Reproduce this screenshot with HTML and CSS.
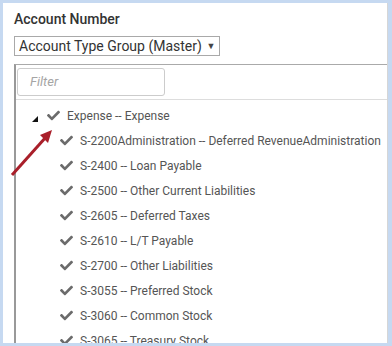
FILE: index.html
```html
<!DOCTYPE html>
<html>
<head>
  <meta content="text/html; charset=UTF-8" http-equiv="content-type" />
<link rel="stylesheet" href="styles.css">
</head>
<body>
  <div id="panel">
    <div class="fieldLabel">Account Number</div>
    <div class="selectBox">Account Type Group (Master) <span class="caret">&#9660;</span></div>
    <div id="treeBox">
      <div class="filterRow">
        <div class="filterInput">Filter</div>
      </div>
      <ul class="tree">
        <li class="root">
          <span class="toggle"></span>
          <svg class="check" viewBox="0 0 512 512"><path d="M173.9 439.4l-166.4-166.4c-10-10-10-26.2 0-36.2l36.2-36.2c10-10 26.2-10 36.2 0L192 312.7 432.1 72.6c10-10 26.2-10 36.2 0l36.2 36.2c10 10 10 26.2 0 36.2l-294.4 294.4c-10 10-26.2 10-36.2 0z"/></svg>
          <span class="label">Expense -- Expense</span>
        </li>
        <li><svg class="check" viewBox="0 0 512 512"><path d="M173.9 439.4l-166.4-166.4c-10-10-10-26.2 0-36.2l36.2-36.2c10-10 26.2-10 36.2 0L192 312.7 432.1 72.6c10-10 26.2-10 36.2 0l36.2 36.2c10 10 10 26.2 0 36.2l-294.4 294.4c-10 10-26.2 10-36.2 0z"/></svg><span class="label">S-2200Administration -- Deferred RevenueAdministration</span></li>
        <li><svg class="check" viewBox="0 0 512 512"><path d="M173.9 439.4l-166.4-166.4c-10-10-10-26.2 0-36.2l36.2-36.2c10-10 26.2-10 36.2 0L192 312.7 432.1 72.6c10-10 26.2-10 36.2 0l36.2 36.2c10 10 10 26.2 0 36.2l-294.4 294.4c-10 10-26.2 10-36.2 0z"/></svg><span class="label">S-2400 -- Loan Payable</span></li>
        <li><svg class="check" viewBox="0 0 512 512"><path d="M173.9 439.4l-166.4-166.4c-10-10-10-26.2 0-36.2l36.2-36.2c10-10 26.2-10 36.2 0L192 312.7 432.1 72.6c10-10 26.2-10 36.2 0l36.2 36.2c10 10 10 26.2 0 36.2l-294.4 294.4c-10 10-26.2 10-36.2 0z"/></svg><span class="label">S-2500 -- Other Current Liabilities</span></li>
        <li><svg class="check" viewBox="0 0 512 512"><path d="M173.9 439.4l-166.4-166.4c-10-10-10-26.2 0-36.2l36.2-36.2c10-10 26.2-10 36.2 0L192 312.7 432.1 72.6c10-10 26.2-10 36.2 0l36.2 36.2c10 10 10 26.2 0 36.2l-294.4 294.4c-10 10-26.2 10-36.2 0z"/></svg><span class="label">S-2605 -- Deferred Taxes</span></li>
        <li><svg class="check" viewBox="0 0 512 512"><path d="M173.9 439.4l-166.4-166.4c-10-10-10-26.2 0-36.2l36.2-36.2c10-10 26.2-10 36.2 0L192 312.7 432.1 72.6c10-10 26.2-10 36.2 0l36.2 36.2c10 10 10 26.2 0 36.2l-294.4 294.4c-10 10-26.2 10-36.2 0z"/></svg><span class="label">S-2610 -- L/T Payable</span></li>
        <li><svg class="check" viewBox="0 0 512 512"><path d="M173.9 439.4l-166.4-166.4c-10-10-10-26.2 0-36.2l36.2-36.2c10-10 26.2-10 36.2 0L192 312.7 432.1 72.6c10-10 26.2-10 36.2 0l36.2 36.2c10 10 10 26.2 0 36.2l-294.4 294.4c-10 10-26.2 10-36.2 0z"/></svg><span class="label">S-2700 -- Other Liabilities</span></li>
        <li><svg class="check" viewBox="0 0 512 512"><path d="M173.9 439.4l-166.4-166.4c-10-10-10-26.2 0-36.2l36.2-36.2c10-10 26.2-10 36.2 0L192 312.7 432.1 72.6c10-10 26.2-10 36.2 0l36.2 36.2c10 10 10 26.2 0 36.2l-294.4 294.4c-10 10-26.2 10-36.2 0z"/></svg><span class="label">S-3055 -- Preferred Stock</span></li>
        <li><svg class="check" viewBox="0 0 512 512"><path d="M173.9 439.4l-166.4-166.4c-10-10-10-26.2 0-36.2l36.2-36.2c10-10 26.2-10 36.2 0L192 312.7 432.1 72.6c10-10 26.2-10 36.2 0l36.2 36.2c10 10 10 26.2 0 36.2l-294.4 294.4c-10 10-26.2 10-36.2 0z"/></svg><span class="label">S-3060 -- Common Stock</span></li>
        <li><svg class="check" viewBox="0 0 512 512"><path d="M173.9 439.4l-166.4-166.4c-10-10-10-26.2 0-36.2l36.2-36.2c10-10 26.2-10 36.2 0L192 312.7 432.1 72.6c10-10 26.2-10 36.2 0l36.2 36.2c10 10 10 26.2 0 36.2l-294.4 294.4c-10 10-26.2 10-36.2 0z"/></svg><span class="label">S-3065 -- Treasury Stock</span></li>
      </ul>
    </div>
    <!-- callout arrow drawn over the tree -->
    <svg class="callout" width="60" height="60" viewBox="0 0 60 60">
      <line x1="2" y1="54" x2="36" y2="16" stroke="#a91f2a" stroke-width="3"/>
      <polygon points="42,9 30,14 38,22" fill="#a91f2a"/>
    </svg>
  </div>
</body>
</html>
```

FILE: styles.css
```css
html, body {
  margin: 0;
  padding: 0;
  background: #c6d9f1;
  overflow: hidden;
}
body {
  padding: 3px 4px 3px 3px;
  height: 346px;
  box-sizing: border-box;
  font-family: Roboto, "Liberation Sans", sans-serif;
}
#panel {
  position: relative;
  background: #fff;
  border-right: 1px solid #d6d6d6;
  height: 340px;
  padding: 6px 0 0 11px;
  box-sizing: border-box;
  overflow: hidden;
}
.fieldLabel {
  font-size: 14px;
  font-weight: 500;
  color: #333;
  line-height: 20px;
}
.selectBox {
  display: inline-block;
  margin-top: 7px;
  height: 20px;
  line-height: 19px;
  padding: 0 4px 0 4px;
  border: 1px solid #a9a9a9;
  font-size: 14px;
  color: #333;
  box-sizing: border-box;
}
.selectBox .caret {
  font-size: 9px;
  color: #444;
  vertical-align: 2px;
  margin-left: 1px;
}
#treeBox {
  margin-top: 8px;
  border-top: 1px solid #aaa;
  border-left: 2px solid #999;
  height: 300px;
}
.filterRow {
  padding: 3px 0 3px 1px;
  border-bottom: 1px solid #ddd;
}
.filterInput {
  width: 148px;
  height: 28px;
  box-sizing: border-box;
  border: 1px solid #ccc;
  border-radius: 3px;
  padding-left: 12px;
  line-height: 26px;
  font-size: 13px;
  font-style: italic;
  color: #a5a5a5;
}
.tree {
  list-style-type: none;
  margin: 0;
  padding: 3px 0 0 0;
}
.tree li {
  display: flex;
  align-items: center;
  height: 25px;
  padding-left: 44px;
  font-size: 12px;
  color: #555;
  white-space: nowrap;
}
.tree li.root {
  padding-left: 16px;
}
.tree .toggle {
  flex-shrink: 0;
  width: 0;
  height: 0;
  border-left: 6px solid transparent;
  border-bottom: 6px solid #111;
  margin: 6px 9px 0 0;
}
.tree .check {
  flex-shrink: 0;
  width: 13px;
  height: 13px;
  fill: #6b6b6b;
  margin-right: 7px;
}
.callout {
  position: absolute;
  left: 7px;
  top: 118px;
}
```
